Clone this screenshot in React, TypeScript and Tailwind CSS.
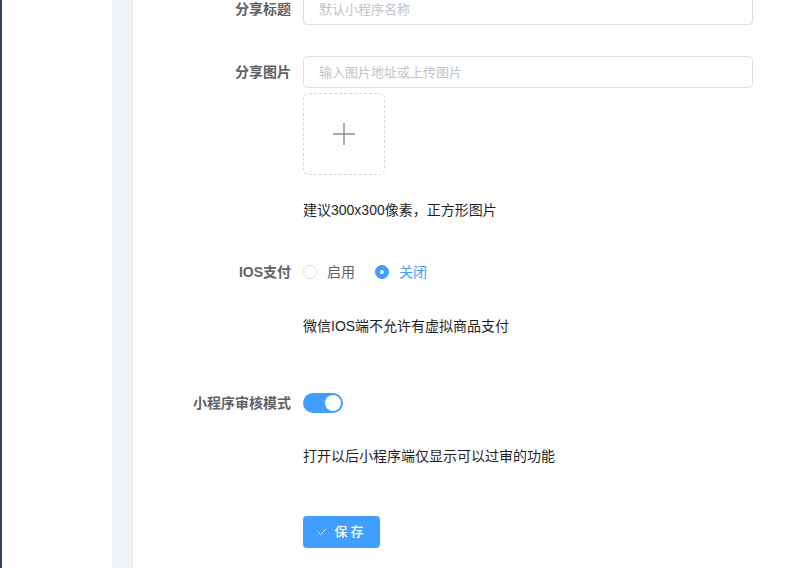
import { Check } from "lucide-react";

const FONT = "font-['Liberation_Sans','Noto_Sans_CJK_SC',sans-serif]";

const Label = ({ text }: { text: string }) => (
  <label className="w-[170px] shrink-0 pr-3 text-right text-sm font-bold leading-8 text-[#606266]">
    {text}
  </label>
);

const Hint = ({ text }: { text: string }) => (
  <div className="flex">
    <div className="w-[170px] shrink-0" />
    <p className="text-sm leading-8 text-[#1f1f1f]">{text}</p>
  </div>
);

const Radio = ({ label, checked }: { label: string; checked?: boolean }) => (
  <label className="flex items-center gap-[10px] cursor-pointer">
    {checked ? (
      <span className="flex h-[14px] w-[14px] items-center justify-center rounded-full border border-[#409eff] bg-[#409eff]">
        <span className="h-1 w-1 rounded-full bg-white" />
      </span>
    ) : (
      <span className="h-[14px] w-[14px] rounded-full border border-[#dcdfe6] bg-white" />
    )}
    <span className={`text-sm ${checked ? "text-[#409eff]" : "text-[#606266]"}`}>{label}</span>
  </label>
);

export default function App() {
  return (
    <div className={`flex h-[568px] w-full overflow-hidden bg-white ${FONT}`}>
      {/* sidebar edge */}
      <div className="w-[2px] shrink-0 bg-[#304156]" />
      <div className="w-[110px] shrink-0 bg-white" />
      <div className="w-[21px] shrink-0 border-r border-[#e8ebef] bg-[#f0f3f7]" />

      <main className="flex-1">
        <form className="-mt-[7px]">
          {/* 分享标题 */}
          <div className="flex">
            <Label text="分享标题" />
            <input
              placeholder="默认小程序名称"
              className="h-8 w-[450px] rounded border border-[#dcdfe6] px-[15px] text-[13px] text-[#606266] outline-none placeholder:text-[#c0c4cc]"
            />
          </div>

          {/* 分享图片 */}
          <div className="mt-[31px] flex">
            <Label text="分享图片" />
            <div className="flex flex-col">
              <input
                placeholder="输入图片地址或上传图片"
                className="h-8 w-[450px] rounded border border-[#dcdfe6] px-[15px] text-[13px] text-[#606266] outline-none placeholder:text-[#c0c4cc]"
              />
              <div className="mt-[5px] flex h-[82px] w-[82px] items-center justify-center rounded-md border border-dashed border-[#d4d7dd] bg-white">
                <svg width="24" height="24" viewBox="0 0 24 24">
                  <path d="M12 1v22M1 12h22" stroke="#8c939d" strokeWidth="1.5" fill="none" />
                </svg>
              </div>
            </div>
          </div>

          <div className="mt-[19px]">
            <Hint text="建议300x300像素，正方形图片" />
          </div>

          {/* IOS支付 */}
          <div className="mt-[30px] flex items-center">
            <Label text="IOS支付" />
            <div className="flex items-center gap-5">
              <Radio label="启用" />
              <Radio label="关闭" checked />
            </div>
          </div>

          <div className="mt-[22px]">
            <Hint text="微信IOS端不允许有虚拟商品支付" />
          </div>

          {/* 审核模式 */}
          <div className="mt-[45px] flex items-center">
            <Label text="小程序审核模式" />
            <button
              type="button"
              className="flex h-5 w-10 items-center justify-end rounded-full bg-[#409eff] px-[2px]"
            >
              <span className="h-4 w-4 rounded-full bg-white" />
            </button>
          </div>

          <div className="mt-[21px]">
            <Hint text="打开以后小程序端仅显示可以过审的功能" />
          </div>

          {/* 保存 */}
          <div className="mt-[44px] flex">
            <div className="w-[170px] shrink-0" />
            <button
              type="button"
              className="flex h-8 w-[77px] items-center justify-center gap-[6px] rounded bg-[#409eff] text-[13px] font-medium text-white"
            >
              <Check size={12} strokeWidth={1.5} />
              <span className="tracking-[3px]">保存</span>
            </button>
          </div>
        </form>
      </main>
    </div>
  );
}
